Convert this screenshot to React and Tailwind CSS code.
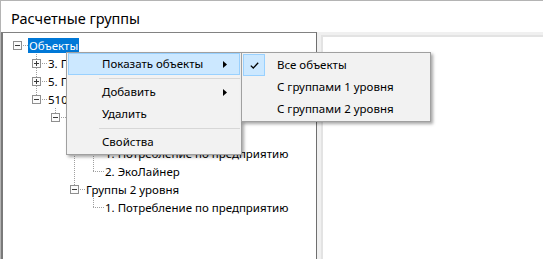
import React from "react";

const FONT = { fontFamily: '"Noto Sans", "Open Sans", sans-serif' };

const rows = [
  { L: 0, text: "Объекты", box: "minus", sel: true, own: null, full: [] },
  { L: 1, text: "3. Группы потребителей", box: "plus", own: "mid", full: [] },
  { L: 1, text: "5. Группы объектов", box: "plus", own: "mid", full: [] },
  { L: 1, text: "510 Объекты учета", box: "minus", own: "end", full: [] },
  { L: 2, text: "Группы объектов", box: "minus", own: "end", full: [] },
  { L: 3, text: "Группы 1 уровня", box: "minus", own: "mid", full: [] },
  { L: 4, text: "1. Потребление по предприятию", box: null, own: "mid", full: [3] },
  { L: 4, text: "2. ЭкоЛайнер", box: null, own: "end", full: [3] },
  { L: 3, text: "Группы 2 уровня", box: "minus", own: "end", full: [] },
  { L: 4, text: "1. Потребление по предприятию", box: null, own: "end", full: [] },
];

const cxOf = (L) => 14 + 19 * L;
const LINE = "#a0a0a0";

function RowLines({ r }) {
  const cx = cxOf(r.L);
  const w = cx + 11;
  return (
    <svg width={w} height={18} className="shrink-0" shapeRendering="crispEdges">
      {r.full.map((k) => (
        <line key={k} x1={cxOf(k) + 0.5} y1={0} x2={cxOf(k) + 0.5} y2={18} stroke={LINE} strokeDasharray="1 1" />
      ))}
      {r.own === "mid" && (
        <line x1={cx + 0.5} y1={0} x2={cx + 0.5} y2={18} stroke={LINE} strokeDasharray="1 1" />
      )}
      {r.own === "end" && (
        <line x1={cx + 0.5} y1={0} x2={cx + 0.5} y2={10} stroke={LINE} strokeDasharray="1 1" />
      )}
      <line x1={cx} y1={9.5} x2={cx + 11} y2={9.5} stroke={LINE} strokeDasharray="1 1" />
      {r.box && (
        <g>
          <rect x={cx - 3.5} y={5.5} width={8} height={8} fill="#fbfbfb" stroke="#8f8f8f" />
          <rect x={cx - 2} y={9} width={5} height={1} fill="#3a3a3a" />
          {r.box === "plus" && <rect x={cx} y={7} width={1} height={5} fill="#3a3a3a" />}
        </g>
      )}
    </svg>
  );
}

function Arrow() {
  return (
    <svg width="4" height="7" viewBox="0 0 4 7">
      <polygon points="0,0 4,3.5 0,7" fill="#000" />
    </svg>
  );
}

function MenuItem({ label, hl, arrow }) {
  return (
    <div
      className={
        "mx-[1px] h-[22px] flex items-center pl-[33px] pr-[12px] border " +
        (hl ? "bg-[#cce8ff] border-[#99d1ff]" : "border-transparent")
      }
    >
      <span className="flex-1 text-[11.5px] text-black">{label}</span>
      {arrow && <Arrow />}
    </div>
  );
}

function Sep() {
  return (
    <div className="h-[6px] flex items-center pl-[32px] pr-[1px]">
      <div className="h-px w-full bg-[#d7d7d7]" />
    </div>
  );
}

export default function App() {
  return (
    <div
      className="relative w-[543px] h-[259px] bg-white border-l border-t border-[#b4b4b4] overflow-hidden flex flex-col"
      style={FONT}
    >
      <div className="h-[31px] shrink-0 flex items-center pl-[10px] pt-[5px] text-[14.5px] text-black">
        Расчетные группы
      </div>
      <div className="flex-1 flex bg-[#f0f0f0]">
        <div className="w-[316px] shrink-0 bg-white border-t border-l-2 border-r border-t-[#828282] border-l-[#7a7a7a] border-r-[#6f6f6f] pt-[3px]">
          {rows.map((r, i) => (
            <div key={i} className="h-[18px] flex items-center whitespace-nowrap">
              <RowLines r={r} />
              <span
                className={
                  "px-[1px] leading-[15px] text-[11.5px] " +
                  (r.sel ? "bg-[#0078d7] text-white" : "text-black")
                }
              >
                {r.text}
              </span>
            </div>
          ))}
        </div>
        <div className="flex-1 pl-[4px] pt-[3px]">
          <div className="h-full bg-white border-t-2 border-l-2 border-[#e3e3e3]" />
        </div>
      </div>

      {/* context menu */}
      <div className="absolute left-[65px] top-[51px] w-[176px] bg-[#f2f2f2] border border-[#a0a0a0] shadow-[2px_2px_3px_rgba(0,0,0,0.35)] pb-[1px]">
        <MenuItem label="Показать объекты" hl arrow />
        <Sep />
        <MenuItem label="Добавить" arrow />
        <MenuItem label="Удалить" />
        <Sep />
        <MenuItem label="Свойства" />
      </div>

      {/* submenu */}
      <div className="absolute left-[240px] top-[51px] w-[190px] bg-[#f2f2f2] border border-[#a0a0a0] shadow-[2px_2px_3px_rgba(0,0,0,0.35)] pt-[1px] pb-[1px]">
        {["Все объекты", "С группами 1 уровня", "С группами 2 уровня"].map((t, i) => (
          <div key={i} className="h-[22px] flex items-center mx-[1px]">
            <div className="w-[22px] h-[22px] flex items-center justify-center">
              {i === 0 && (
                <div className="w-[22px] h-[22px] bg-[#cce8ff] border border-[#99d1ff] flex items-center justify-center">
                  <svg width="9" height="7" viewBox="0 0 9 7">
                    <path d="M0.8 3.6 L3.3 6 L8.2 0.8" fill="none" stroke="#000" strokeWidth="1.3" />
                  </svg>
                </div>
              )}
            </div>
            <span className="pl-[12px] text-[11.5px] text-black">{t}</span>
          </div>
        ))}
      </div>
    </div>
  );
}
